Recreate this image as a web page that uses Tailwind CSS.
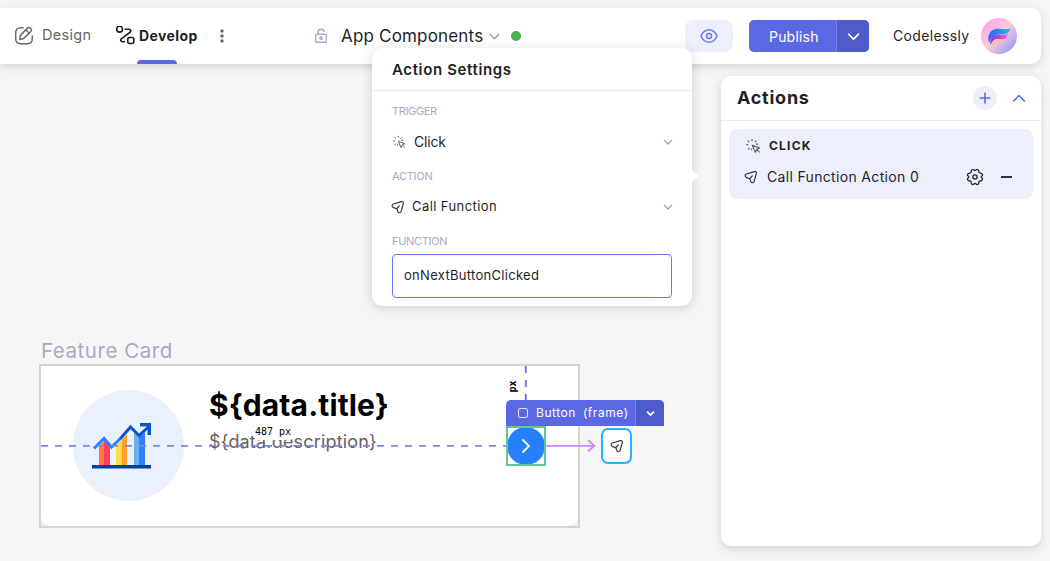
<!DOCTYPE html>
<html lang="en">
<head>
<meta charset="utf-8">
<title>App Components</title>
<script src="https://cdn.jsdelivr.net/npm/@tailwindcss/browser@4"></script>
</head>
<body class="relative h-[561px] w-[1050px] overflow-hidden bg-[#f6f6f6] font-['Inter',sans-serif] text-[#1f1f1f]">
<svg class="hidden">
  <symbol id="send" viewBox="0 0 16 16"><path d="M2.600 4.600 11.800 1.900c1.700-.4 2.700.5 2.300 2.100l-2.500 9c-.5 1.900-2.900 2.100-3.700.3L6.600 10 3 8.700C.8 7.800.7 5.300 2.600 4.600ZM6.600 10 9.500 6.700" fill="none" stroke="currentColor" stroke-width="1.350" stroke-linejoin="round" stroke-linecap="round"/></symbol>
  <symbol id="click" viewBox="0 0 16 16"><path d="M7.200 7.200 14.700 10 11.700 11.300 10.300 14.400ZM11.600 11.300 14.500 14.400M7 .9v2.300M2.700 2.500 4.200 4.200M1 6.800h2.400M2.800 11.500l1.700-1.700M11.400 2.600 9.900 4.200M10.900 6.100h2M6.300 10.500v1.700" fill="none" stroke="currentColor" stroke-width="1.050" stroke-linejoin="round"/></symbol>
  <symbol id="down" viewBox="0 0 10 10"><path d="M1.200 3.200 5 7 8.800 3.200" fill="none" stroke="currentColor" stroke-width="1.200" stroke-linecap="round" stroke-linejoin="round"/></symbol>
</svg>

<header class="mt-2 flex h-14 w-[1041px] items-center rounded-r-[10px] bg-white pl-[14px] shadow-[0_3px_10px_rgba(0,0,0,0.14)]">
  <svg class="size-5 text-[#666]" viewBox="0 0 20 20" fill="none" stroke="currentColor" stroke-width="1.500" stroke-linecap="round" stroke-linejoin="round"><path d="M9 1.700H7C3 1.700 1.700 3 1.700 7v5.500c0 4 1.300 5.300 5.300 5.300h6c4 0 5.300-1.300 5.300-5.300V10"/><path d="m13.300 2.400-6.600 6.700c-.5.5-.9 2.800-.9 4.200 1.300 0 3.500-.4 4.100-1l6.800-6.700c1.200-1.300 1-2.500 0-3.400-1.100-1-2.200-1-3.400.2ZM12.200 3.600c.6 1.700 1.700 2.900 3.400 3.400"/></svg>
  <span class="ml-2 w-[73px] pb-[2px] text-[14.500px] tracking-[0.3px] whitespace-nowrap text-[#666]">Design</span>
  <svg class="size-5" viewBox="0 0 20 20" fill="none" stroke="#1f1f1f" stroke-width="1.600" stroke-linecap="round"><circle cx="4.600" cy="3.200" r="2.900"/><rect x="12.800" y="11.500" width="6" height="6" rx="1.600"/><path d="M10.300 3.300h3.500c2.300 0 2.600 2 1 3.200L6.500 12.600c-1.500 1.100-1 3.100 1 3.100h2"/></svg>
  <div class="relative ml-[4px] flex h-full w-[75px] items-center">
    <span class="pb-[2px] text-[14px] font-bold tracking-[0.4px] whitespace-nowrap">Develop</span>
    <i class="absolute bottom-0 -left-[2px] h-1 w-10 rounded-t bg-[#5b68e3]"></i>
  </div>
  <svg class="ml-[4px] h-4 w-2 text-[#666]" viewBox="0 0 8 16" fill="currentColor"><circle cx="4" cy="3" r="1.700"/><circle cx="4" cy="8" r="1.700"/><circle cx="4" cy="13" r="1.700"/></svg>
  <svg class="ml-[88px] h-4 w-[14px] text-[#a5aac8]" viewBox="0 0 14 16" fill="none" stroke="currentColor" stroke-width="1.400"><rect x="1.700" y="6.200" width="10.600" height="8" rx=".8"/><path d="M4 6.200V4.200c0-3.900 6-3.900 6.100-.2"/><circle cx="7" cy="10.200" r="1.200" fill="currentColor"/></svg>
  <span class="ml-[13px] w-[148px] pt-[2px] text-[17px] tracking-[0.180px] whitespace-nowrap">App Components</span>
  <svg class="size-[11px] text-[#9298c0]"><use href="#down"/></svg>
  <i class="ml-[11px] size-[10px] rounded-full bg-[#4caf50]"></i>
  <div class="ml-[164px] flex h-8 w-12 items-center justify-center rounded-lg bg-[#edf0fc] text-[#6975e6]">
    <svg class="size-[18px]" viewBox="0 0 18 18" fill="none" stroke="currentColor" stroke-width="1.500"><path d="M.9 9C4.800.6 13.200.6 17.100 9 13.200 17.400 4.800 17.400.9 9Z" stroke-linejoin="round"/><circle cx="9" cy="9" r="2.500"/></svg>
  </div>
  <div class="ml-4 flex h-8 w-[120px] overflow-hidden rounded-[5px] bg-[#5b68e3] text-white">
    <span class="w-[87px] pl-5 text-[14px] leading-[33px] tracking-[0.2px] whitespace-nowrap">Publish</span>
    <span class="flex flex-1 items-center justify-center border-l border-[#7681e8] bg-[#505bcb]"><svg class="size-[13px]"><use href="#down"/></svg></span>
  </div>
  <span class="ml-6 w-[88px] pb-px text-[14px] tracking-[0.35px] whitespace-nowrap">Codelessly</span>
  <svg class="size-9" viewBox="0 0 36 36">
    <defs><linearGradient id="av" x1="0" y1="0" x2="1" y2="1"><stop offset=".1" stop-color="#f9a3ee"/><stop offset=".48" stop-color="#f6ced7"/><stop offset=".9" stop-color="#9c98fb"/></linearGradient><linearGradient id="bl"><stop stop-color="#3b5ff5"/><stop offset="1" stop-color="#22b8ee"/></linearGradient><linearGradient id="pk"><stop stop-color="#7d35e0"/><stop offset="1" stop-color="#ff5fd0"/></linearGradient></defs>
    <circle cx="18" cy="18" r="18" fill="url(#av)"/>
    <path d="M8 25C6 18 8.500 11.500 16 10.800c5-.3 9 1.200 13.200-.4-1 5-4.500 6.200-9.200 6C13.500 16.200 10 19 8 25Z" fill="url(#bl)"/>
    <path d="M9.500 27c-1-6 2-10.500 8-10.300 3 .2 6.500.9 9.500-.7-1.200 4.700-4 5.700-8.200 5.200-5-.5-7.300 1.300-9.300 5.800Z" fill="url(#pk)"/>
    <path d="M10.500 28.500c.5-5 3-7.500 7.500-7 2 .2 4.500.4 7-.9-1.500 4.500-4.500 4.300-7.500 4-3.500-.3-5 1-7 3.900Z" fill="#f8bcae"/>
  </svg>
</header>

<aside class="mt-3 ml-[721px] h-[470px] w-[320px] rounded-[10px] bg-white shadow-[0_3px_10px_rgba(0,0,0,0.14)]">
  <div class="flex h-[45px] items-center border-b border-[#e9ebf8] pl-4">
    <h2 class="w-[236px] pb-px text-[18px] font-bold tracking-[0.750px] whitespace-nowrap">Actions</h2>
    <span class="flex size-6 items-center justify-center rounded-full bg-[#edf0fc]"><svg class="size-3" viewBox="0 0 12 12" stroke="#5b68e3" stroke-width="1.600"><path d="M6 .5v11M.5 6h11"/></svg></span>
    <svg class="ml-[15px] h-3 w-[14px]" viewBox="0 0 14 12" fill="none" stroke="#5b68e3" stroke-width="1.600" stroke-linejoin="round"><path d="m1.200 9.500 5.800-6 5.800 6"/></svg>
  </div>
  <div class="mx-2 mt-2 h-[70px] rounded-lg bg-[#edf0fc] pl-4">
    <div class="flex h-[34px] items-center"><svg class="size-4 text-[#555]"><use href="#click"/></svg><b class="ml-2 text-[12px] tracking-[1.200px]">CLICK</b></div>
    <div class="flex h-7 items-center"><svg class="-ml-px size-[14px] text-[#333]"><use href="#send"/></svg>
      <span class="ml-[9px] w-[199px] pb-px text-[14px] tracking-[0.330px] whitespace-nowrap">Call Function Action 0</span>
      <svg class="size-[18px] shrink-0" viewBox="0 0 18 18" fill="none" stroke="#222" stroke-width="1.300" stroke-linejoin="round"><path d="M6.600 1.500C7.400 1 8.200 2.600 9 2.600S10.600 1 11.400 1.500L12.300 2C13.200 2.600 12.500 3.600 13 4.500S15.500 4.800 16 5.800L16.500 6.800C17 7.800 15.200 8.100 15.200 9S17 10.200 16.500 11.200L16 12.200C15.500 13.200 13.500 12.600 13 13.500S13.200 15.400 12.300 16L11.400 16.500C10.600 17 9.800 15.400 9 15.400S7.400 17 6.600 16.500L5.700 16C4.800 15.400 5.500 14.400 5 13.500S2.500 13.200 2 12.200L1.500 11.200C1 10.200 2.800 9.900 2.800 9S1 7.800 1.500 6.800L2 5.800C2.500 4.800 4.500 5.400 5 4.500S4.800 2.600 5.700 2Z"/><circle cx="9" cy="9" r="2.100"/></svg>
      <i class="ml-[17px] h-[2px] w-[11px] bg-[#333]"></i></div>
  </div>
</aside>

<main>
  <h3 class="absolute top-[337px] left-[41px] text-[20.500px] leading-7 tracking-[0.550px] whitespace-nowrap text-[#a5aac8]">Feature Card</h3>
  <section class="absolute top-[364px] left-[39px] h-[164px] w-[541px] border-2 border-[#d4d4d4] bg-[#eeeeee]">
    <div class="flex h-full rounded-b-[10px] bg-white pt-6 pl-8">
      <div class="flex size-[111px] items-center justify-center rounded-full bg-[#eaf1fc]">
        <svg class="mt-[2px] mr-[13px] h-[48px] w-[60px]" viewBox="0 0 60 48"><path d="M7 23l5-5v25H7Z" fill="#ff7946"/><path d="m12 18 6 5v20h-6Z" fill="#ff4058"/><path d="m24 22 6-5v26h-6Z" fill="#ffdb45"/><path d="m30 17 5-6v32h-5Z" fill="#ff9f27"/><path d="m42 9 5 5v29h-5Z" fill="#69b2e9"/><path d="m47 14 6-5v34h-6Z" fill="#2981ff"/><path d="M0 42h59v3.500H0Z" fill="#003f98"/><path d="m2 25.500 10-10 7.500 8.500L29 15" fill="none" stroke="#2b7fff" stroke-width="3"/><path d="m28.500 15.500 10-11.500 8.500 8.500 10-9" fill="none" stroke="#0a55c5" stroke-width="3"/><path d="M48 0h11v12h-3.500V3.500H48Z" fill="#0a55c5"/></svg>
      </div>
      <div class="ml-[25px] flex flex-col whitespace-nowrap">
        <b class="block h-[36px] text-[30px] leading-[30px] tracking-[0.120px] text-black">${data.title}</b>
        <span class="text-[18px] leading-[32px] tracking-[0.180px] text-[#66605f]">${data.description}</span>
      </div>
    </div>
  </section>
  <svg class="absolute inset-0 h-full w-full" fill="none"><path d="M41 445.800H506" stroke="#7c87ed" stroke-width="1.800" stroke-dasharray="7 7"/><path d="M525.800 366v36" stroke="#6570df" stroke-width="1.800" stroke-dasharray="7 7"/><path d="M546 445.800h48M588 440.300l6.500 5.500-6.500 5.500" stroke="#cf87f8" stroke-width="1.800"/></svg>
  <span class="absolute top-[425px] left-[255px] h-[15px] bg-white text-[10px] leading-[13px] whitespace-pre text-black font-['DejaVu_Sans_Mono',monospace]">487 px</span>
  <span class="absolute top-[380px] left-[506px] h-[13px] w-[13px] -rotate-90 text-center text-[10px] leading-[13px] font-bold text-black font-['DejaVu_Sans_Mono',monospace]">px</span>
  <div class="absolute top-[426px] left-[506px] flex size-10 items-center justify-center border-2 border-[#5dca94] bg-white"><svg class="size-[38px] shrink-0" viewBox="0 0 38 38" fill="none"><circle cx="19" cy="19" r="19" fill="#267ffb"/><path d="m16 13 6 6-6 6" stroke="white" stroke-width="1.800" stroke-linecap="round"/><path d="M.5.5H37.500V37.500H.5Z" stroke="#5dca94" stroke-width="1"/></svg></div>
  <div class="absolute top-[400px] left-[506px] flex h-[26px] w-[158px] items-center overflow-hidden rounded-t-[5px] bg-[#5b68e3] text-white">
    <i class="ml-3 size-[10px] rounded-[2px] border border-white/80"></i>
    <span class="ml-2 w-[99px] text-[12px] tracking-[0.550px] [word-spacing:3px] whitespace-pre">Button (frame)</span>
    <span class="flex h-full flex-1 items-center justify-center border-l border-[#7681e8] bg-[#505bcb]"><svg class="size-[9px]" viewBox="0 0 10 10" fill="none" stroke="currentColor" stroke-width="1.900"><path d="M1.200 3 5 6.800 8.800 3"/></svg></span>
  </div>
  <div class="absolute top-[428px] left-[601px] flex h-9 w-[31px] items-center justify-center rounded-[7px] border-2 border-[#22b5fc] bg-white"><svg class="size-[14px] text-[#333]"><use href="#send"/></svg></div>
</main>

<div class="absolute top-12 left-[372px] h-[258px] w-[320px] rounded-[10px] bg-white shadow-[0_2px_12px_rgba(0,0,0,0.16)]">
  <h2 class="h-[43px] border-b border-[#e9ebf8] pl-5 text-[15px] leading-[43px] font-semibold tracking-[0.630px] whitespace-nowrap">Action Settings</h2>
  <div class="px-5 pt-[10px]">
    <div class="h-[65px]"><p class="text-[11px] leading-5 tracking-[-0.350px] text-[#a5aac8]">TRIGGER</p><div class="flex h-[41px] items-center"><svg class="size-[14px] text-[#555]"><use href="#click"/></svg><span class="ml-2 flex-1 pb-px text-[14px] tracking-[-0.200px]">Click</span><svg class="mr-[-1px] size-[10px] text-[#9298c0]"><use href="#down"/></svg></div></div>
    <div class="h-[65px]"><p class="text-[11px] leading-5 tracking-[-0.250px] text-[#a5aac8]">ACTION</p><div class="flex h-[41px] items-center"><svg class="-ml-px size-[14px] text-[#333]"><use href="#send"/></svg><span class="ml-[7px] flex-1 text-[13px] tracking-[0.420px]">Call Function</span><svg class="mr-[-1px] size-[10px] text-[#9298c0]"><use href="#down"/></svg></div></div>
    <p class="text-[11px] leading-5 tracking-[-0.300px] text-[#a5aac8]">FUNCTION</p>
    <div class="mt-[3px] h-11 rounded border border-[#6b77e8] pl-[11px] text-[13px] leading-[41px] tracking-[0.300px]">onNextButtonClicked</div>
  </div>
  <i class="absolute top-[122px] left-[320px] h-[12px] w-[7px] bg-white [clip-path:polygon(0_0,100%_50%,0_100%)]"></i>
</div>
</body>
</html>
